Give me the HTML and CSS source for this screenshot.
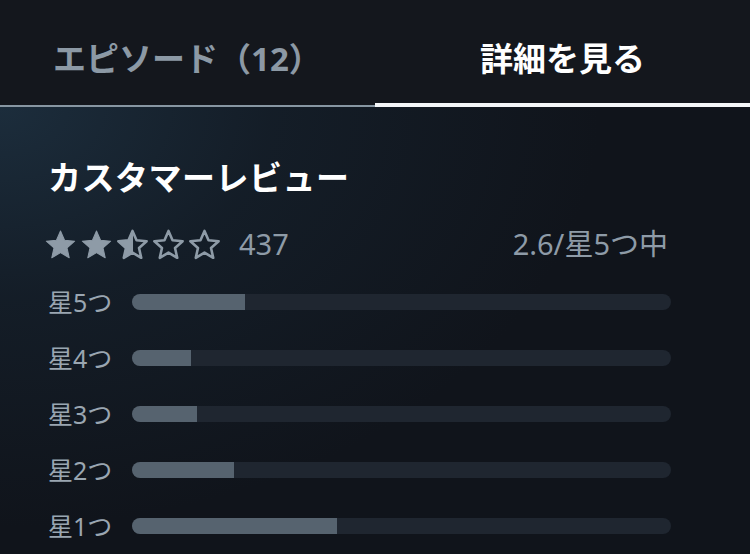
FILE: index.html
```html
<!DOCTYPE html>
<html lang="ja">
<head>
    <meta charset="UTF-8">
    <meta name="viewport" content="width=device-width, initial-scale=1.0">
    <title>詳細を見る</title>
    <link rel="stylesheet" href="styles.css">
</head>
<body>
    <div class="tabs">
        <div class="tab">エピソード（12）</div>
        <div class="tab active">詳細を見る</div>
    </div>

    <div class="reviews">
        <div class="reviews-title">カスタマーレビュー</div>

        <div class="summary">
            <div class="stars">
                <svg class="star" viewBox="0 0 24 24"><path class="full" d="M12 1.5L15.12 8.71 22.94 9.45 17.04 14.64 18.76 22.3 12 18.3 5.24 22.3 6.96 14.64 1.06 9.45 8.88 8.71z"/></svg>
                <svg class="star" viewBox="0 0 24 24"><path class="full" d="M12 1.5L15.12 8.71 22.94 9.45 17.04 14.64 18.76 22.3 12 18.3 5.24 22.3 6.96 14.64 1.06 9.45 8.88 8.71z"/></svg>
                <svg class="star" viewBox="0 0 24 24">
                    <path class="empty" d="M12 1.5L15.12 8.71 22.94 9.45 17.04 14.64 18.76 22.3 12 18.3 5.24 22.3 6.96 14.64 1.06 9.45 8.88 8.71z"/>
                    <path class="full" d="M12 1.5L8.88 8.71 1.06 9.45 6.96 14.64 5.24 22.3 12 18.3z"/>
                </svg>
                <svg class="star" viewBox="0 0 24 24"><path class="empty" d="M12 1.5L15.12 8.71 22.94 9.45 17.04 14.64 18.76 22.3 12 18.3 5.24 22.3 6.96 14.64 1.06 9.45 8.88 8.71z"/></svg>
                <svg class="star" viewBox="0 0 24 24"><path class="empty" d="M12 1.5L15.12 8.71 22.94 9.45 17.04 14.64 18.76 22.3 12 18.3 5.24 22.3 6.96 14.64 1.06 9.45 8.88 8.71z"/></svg>
                <span class="count">437</span>
            </div>
            <div class="average">2.6/星5つ中</div>
        </div>

        <div class="bars">
            <div class="bar-row">
                <span class="bar-label">星5つ</span>
                <div class="bar-track"><div class="bar-fill" style="width: 21%"></div></div>
            </div>
            <div class="bar-row">
                <span class="bar-label">星4つ</span>
                <div class="bar-track"><div class="bar-fill" style="width: 11%"></div></div>
            </div>
            <div class="bar-row">
                <span class="bar-label">星3つ</span>
                <div class="bar-track"><div class="bar-fill" style="width: 12%"></div></div>
            </div>
            <div class="bar-row">
                <span class="bar-label">星2つ</span>
                <div class="bar-track"><div class="bar-fill" style="width: 19%"></div></div>
            </div>
            <div class="bar-row">
                <span class="bar-label">星1つ</span>
                <div class="bar-track"><div class="bar-fill" style="width: 38%"></div></div>
            </div>
        </div>
    </div>
</body>
</html>
```

FILE: styles.css
```css
body {
    margin: 0;
    width: 750px;
    height: 554px;
    overflow: hidden;
    background: #13161c;
    font-family: "Noto Sans", "Noto Sans CJK JP", sans-serif;
    color: #ffffff;
}

/* tab bar */
.tabs {
    display: flex;
    background: #14171d;
}
.tab {
    flex: 1;
    box-sizing: border-box;
    height: 107px;
    padding-top: 39px;
    text-align: center;
    font-size: 33px;
    line-height: 40px;
    font-weight: bold;
    color: #8c99a5;
    border-bottom: 2px solid #8796a2;
}
.tab.active {
    color: #ffffff;
    border-bottom: 4px solid #f4f6f8;
}

/* reviews */
.reviews {
    height: 447px;
    box-sizing: border-box;
    padding: 51px 79px 0 48px;
    background:
        radial-gradient(ellipse 600px 420px at 0 0, #1c2d3c 0%, rgba(22, 34, 46, 0.65) 45%, rgba(16, 20, 27, 0) 100%),
        #10141b;
}
.reviews-title {
    font-size: 33px;
    line-height: 40px;
    font-weight: bold;
    letter-spacing: 0.5px;
}

.summary {
    display: flex;
    justify-content: space-between;
    align-items: center;
    margin-top: 31px;
    height: 30px;
    color: #8e9ba7;
    font-size: 29px;
}
.stars {
    display: flex;
    align-items: center;
    gap: 5px;
    margin-left: -3px;
}
.star {
    width: 31px;
    height: 31px;
}
.star .full {
    fill: #8e9ba7;
    stroke: #8e9ba7;
    stroke-width: 0.8;
    stroke-linejoin: round;
}
.star .empty {
    fill: none;
    stroke: #8e9ba7;
    stroke-width: 2;
    stroke-linejoin: round;
}
.count {
    margin-left: 14px;
    line-height: 30px;
}
.average {
    margin-right: 3px;
    line-height: 30px;
}

.bars {
    margin-top: 15px;
}
.bar-row {
    display: flex;
    align-items: center;
    height: 56px;
}
.bar-label {
    width: 84px;
    font-size: 25px;
    line-height: 28px;
    color: #9aa6b1;
}
.bar-track {
    flex: 1;
    height: 16px;
    border-radius: 8px;
    background: #1f2630;
    overflow: hidden;
}
.bar-fill {
    height: 100%;
    background: #56636f;
}
```
